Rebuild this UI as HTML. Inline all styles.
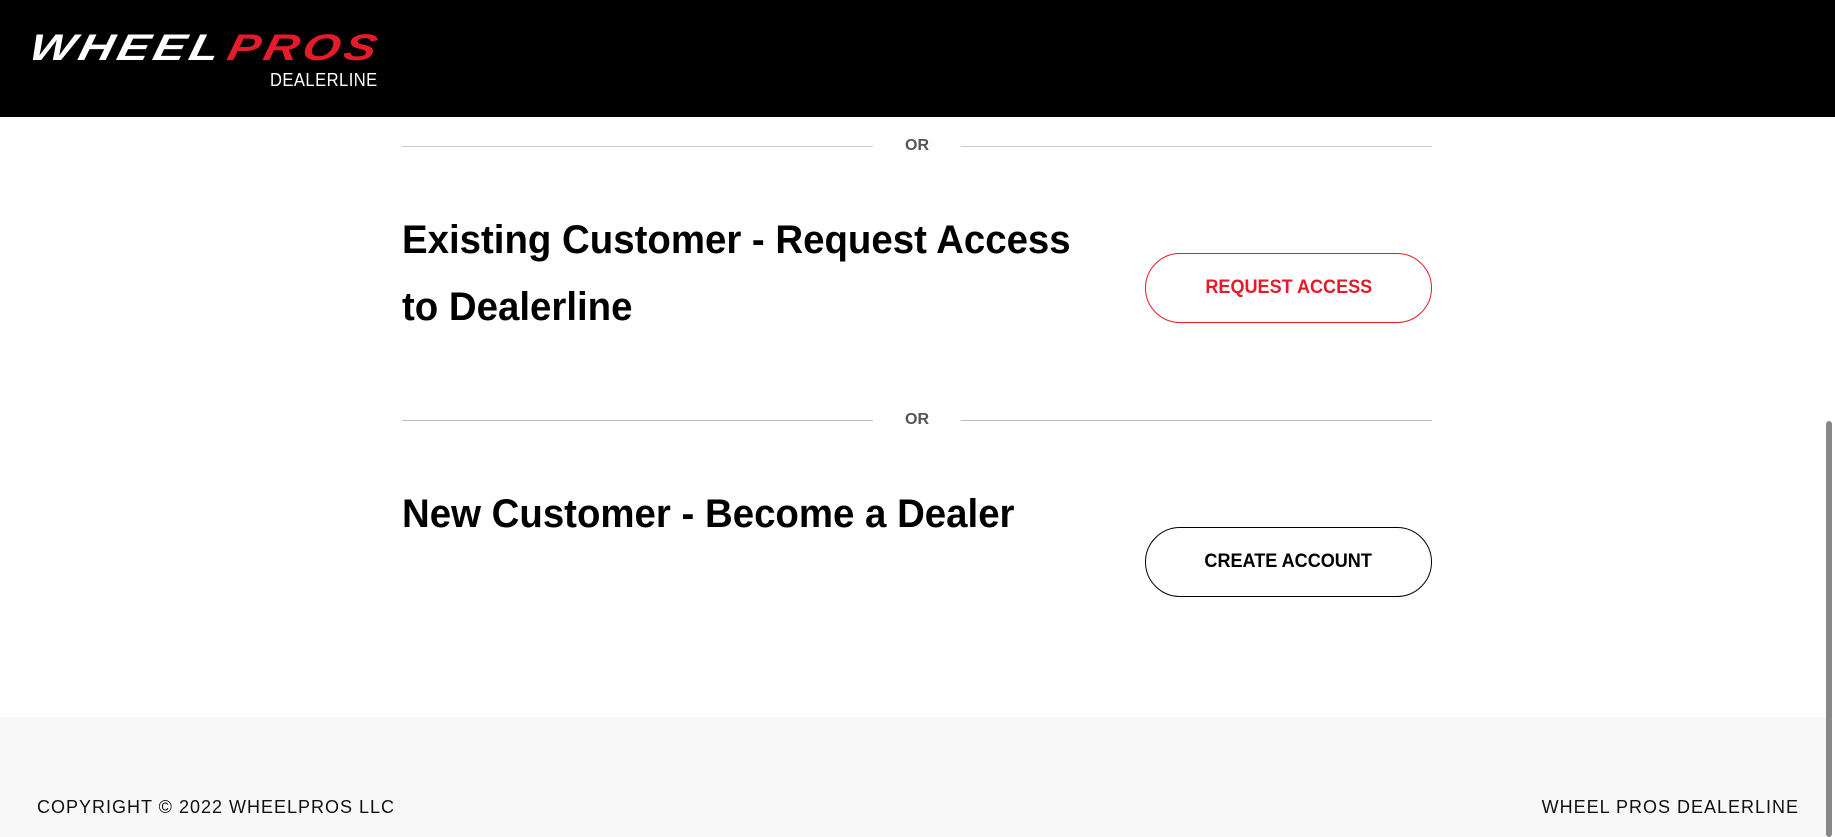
<!DOCTYPE html>
<html><head><meta charset="utf-8"><style>
*{margin:0;padding:0;box-sizing:border-box}
body{width:1835px;height:837px;overflow:hidden;background:#fff;font-family:"Liberation Sans",sans-serif;position:relative}
.hdr{position:absolute;left:0;top:0;width:1835px;height:117px;background:#000}
.logo{position:absolute;left:30px;top:27px;font-weight:bold;font-style:italic;font-size:37px;letter-spacing:3px;white-space:nowrap;transform:scaleX(1.3) skewX(-10deg);transform-origin:left}
.logo .w{color:#fff}.logo .r{color:#e31b2a;margin-left:4px}
.dl{position:absolute;left:270px;top:70px;color:#fff;font-size:18px;letter-spacing:0.5px;transform:scaleX(0.92);transform-origin:left}
.line{position:absolute;height:1px;background:#ccc}
.or{position:absolute;width:60px;left:887px;text-align:center;color:#555;font-size:16px;font-weight:bold}
.h{position:absolute;left:402px;font-weight:bold;font-size:40px;color:#000;line-height:67px;white-space:nowrap;transform:scaleX(0.96);transform-origin:left}
.btn{position:absolute;left:1145px;width:287px;height:70px;border-radius:35px;display:flex;align-items:center;justify-content:center;font-weight:bold;font-size:19px}
.btn span{display:inline-block;transform:scaleX(0.95)}
.ft{position:absolute;left:0;top:717px;width:1826px;height:120px;background:#f8f8f8}
.ft div{position:absolute;top:80px;font-size:18px;color:#111;letter-spacing:1px}
.sb{position:absolute;left:1826px;top:421px;width:6px;height:416px;background:#888;border-radius:3px}
</style></head><body>
<div class="hdr">
<div class="logo"><span class="w">WHEEL</span><span class="r">PROS</span></div>
<div class="dl">DEALERLINE</div>
</div>
<div class="line" style="left:402px;width:471px;top:146px"></div>
<div class="line" style="left:961px;width:471px;top:146px"></div>
<div class="or" style="top:137px">OR</div>
<div class="h" style="top:207px">Existing Customer - Request Access<br>to Dealerline</div>
<div class="btn" style="top:253px;border:1px solid #e31b2a;color:#e31b2a"><span>REQUEST ACCESS</span></div>
<div class="line" style="left:402px;width:471px;top:420px;background:#bbb"></div>
<div class="line" style="left:961px;width:471px;top:420px;background:#bbb"></div>
<div class="or" style="top:411px">OR</div>
<div class="h" style="top:481px">New Customer - Become a Dealer</div>
<div class="btn" style="top:527px;border:1px solid #000;color:#000"><span>CREATE ACCOUNT</span></div>
<div class="ft">
<div style="left:37px">COPYRIGHT © 2022 WHEELPROS LLC</div>
<div style="right:27px">WHEEL PROS DEALERLINE</div>
</div>
<div class="sb"></div>
</body></html>
